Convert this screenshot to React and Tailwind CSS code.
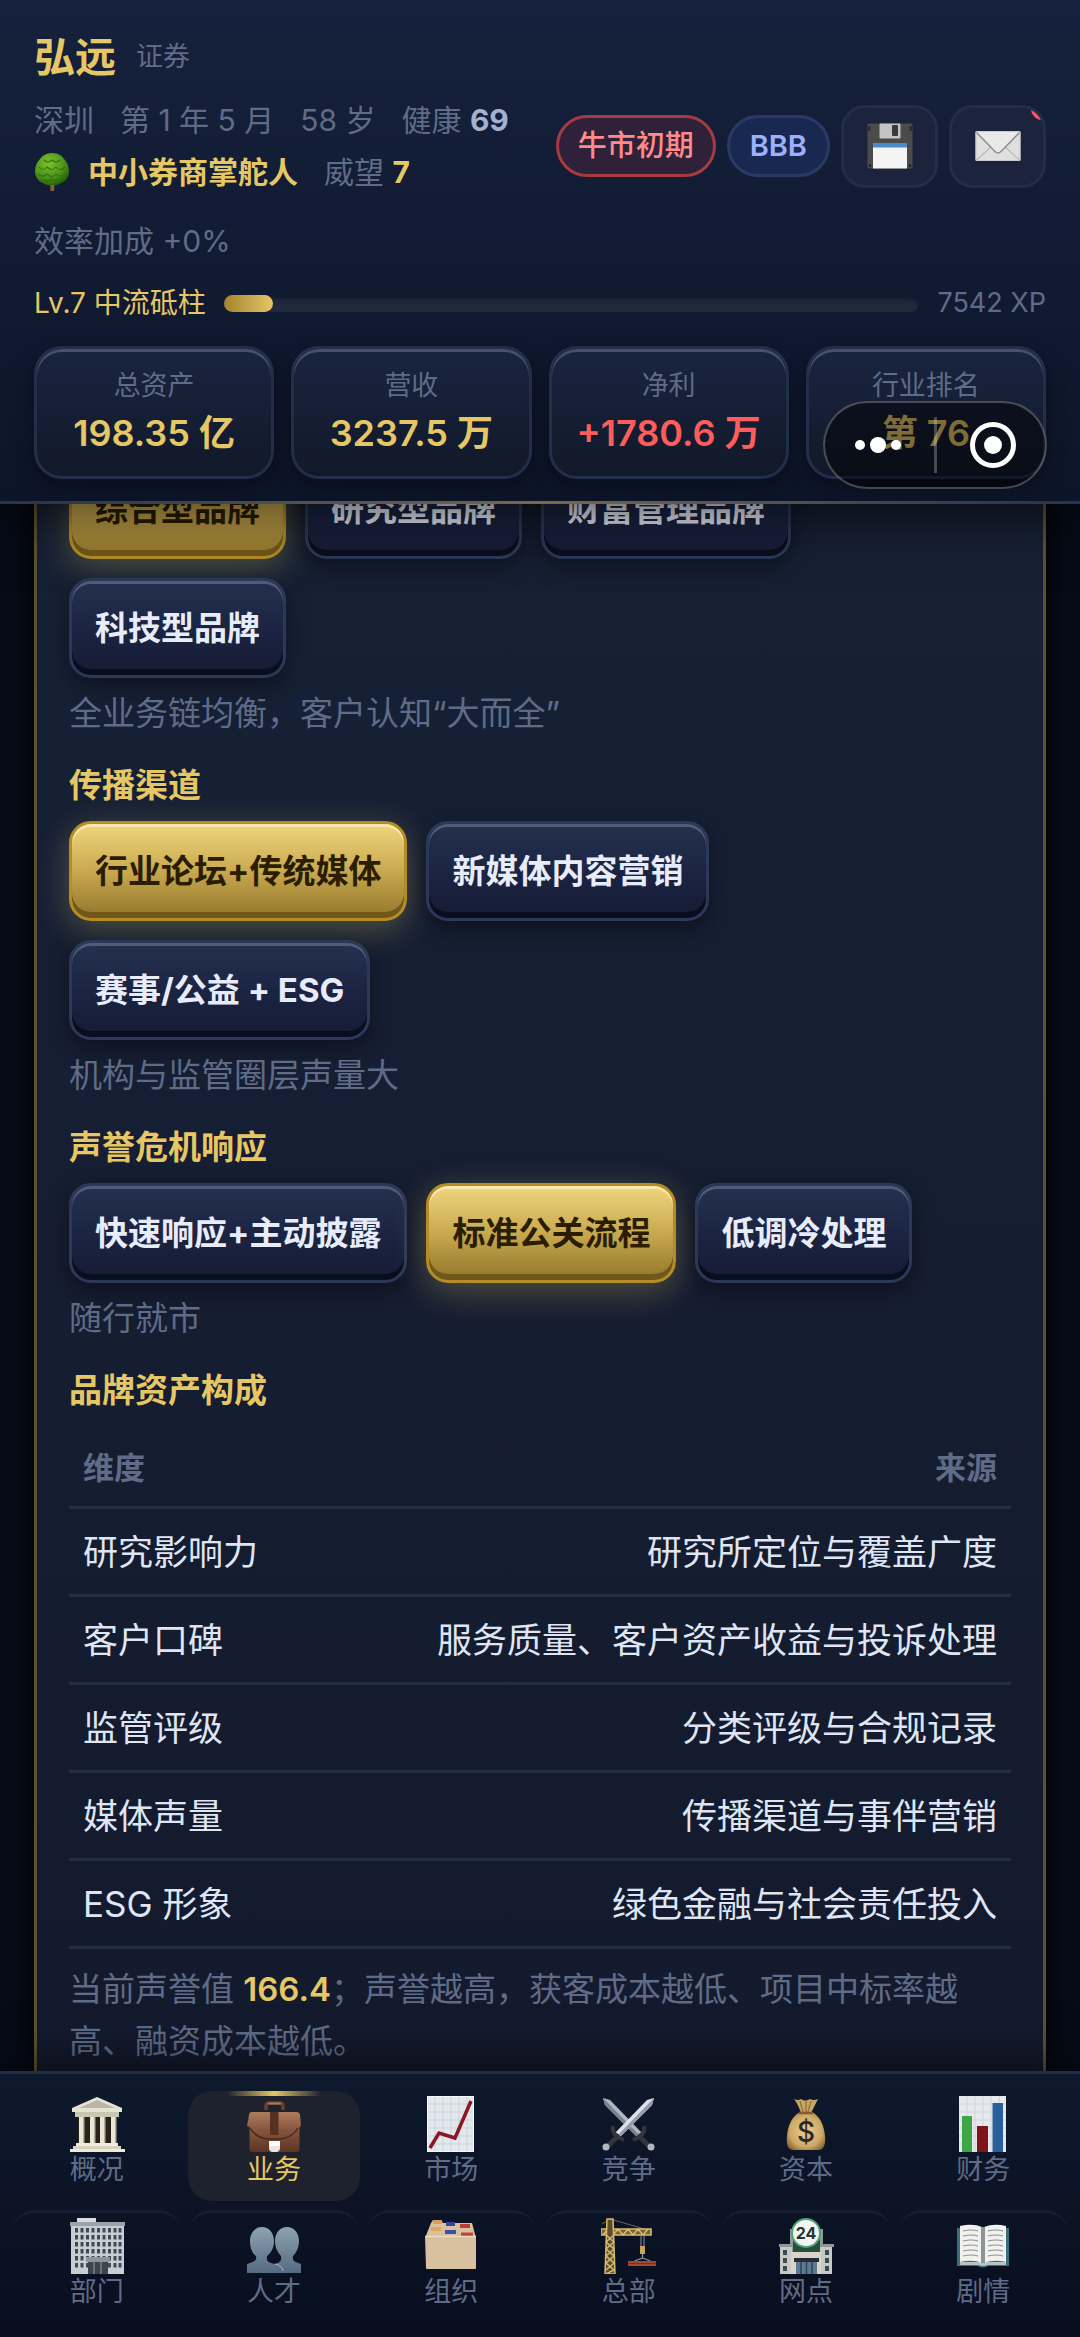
import React from "react";

function TreeIcon() {
  return (
    <svg className="h-[40px] w-[36px]" viewBox="0 0 36 40" aria-hidden="true">
      <defs>
        <radialGradient id="leaf" cx="0.4" cy="0.3" r="0.75">
          <stop offset="0" stopColor="#7fc22e" />
          <stop offset="0.6" stopColor="#4d9418" />
          <stop offset="1" stopColor="#245c0a" />
        </radialGradient>
      </defs>
      <path d="M16 28h5l-1 11h-3.500z" fill="#8a6234" />
      <path d="M18 1c7 0 10 3 12 6 3 3 5 7 5 12 0 6-3 10-8 12-3 2-6 3-9 2-3 1-6 0-9-2-5-2-8-6-8-12 0-5 2-9 5-12 2-3 6-6 12-6z" fill="url(#leaf)" />
      <g fill="none" stroke="#2d6b0e" strokeWidth="1.200" opacity="0.800">
        <path d="M10 8q4 4 8 0q4 4 8 0M5 15q4 5 8 0q5 5 9 0q4 5 9 0M4 22q5 4 9 0q5 5 9 0q5 4 10 0M9 28q5 3 9-1q5 4 9 0" />
      </g>
    </svg>
  );
}

function FloppyIcon() {
  return (
    <svg className="h-[46px] w-[46px]" viewBox="0 0 46 46" aria-hidden="true">
      <rect x="0.500" y="0.500" width="45" height="45" rx="1.500" fill="#4b4b4b" />
      <path d="M0.500 3h3v5h-3zM42.500 3h3v5h-3z" fill="#2f2f2f" />
      <rect x="12.500" y="0.500" width="21" height="15" rx="1" fill="#c4c4c4" />
      <rect x="25" y="2" width="6" height="11" rx="1" fill="#3a3a3a" />
      <rect x="6" y="20" width="34" height="25.500" fill="#f4f4f4" />
      <rect x="6" y="20" width="34" height="4.500" fill="#4b8cc8" />
      <path d="M2 41h2v3h-2zM42 41h2v3h-2z" fill="#222" />
    </svg>
  );
}

function MailIcon() {
  return (
    <svg className="h-[32px] w-[46px]" viewBox="0 0 46 32" aria-hidden="true">
      <rect x="0.500" y="1" width="45" height="30" rx="1" fill="#e0e0e0" />
      <path d="M1 30.500 17 16M45 30.500 29 16" stroke="#b9b9b9" strokeWidth="1.200" />
      <path d="M1 1.500h44L26 21.500q-3 3-6 0z" fill="#e9e9e9" />
      <path d="M1 2 20 21.500q3 3 6 0L45 2" fill="none" stroke="#8d8d8d" strokeWidth="1.500" />
      <rect x="1" y="1.500" width="44" height="29" rx="1" fill="none" stroke="#c9c9c9" />
    </svg>
  );
}

function MuseumIcon() {
  return (
    <svg className="h-14 w-14" viewBox="0 0 56 56" aria-hidden="true">
      <path d="M28 1 53 12v4H3v-4z" fill="#e6e3d3" />
      <path d="M28 4 46 12H10z" fill="#b9b6a5" />
      <path d="M6 16h44v5H6z" fill="#c9c6b4" />
      <path d="M9 21h38v26H9z" fill="#2a2118" />
      <path d="M10 21h5v27h-5zM21 21h5v27h-5zM31 21h5v27h-5zM42 21h5v27h-5z" fill="#e9e6d8" />
      <path d="M14 21h1.500v27H14zM25 21h1.500v27H25zM35 21h1.500v27H35zM46 21h1.500v27H46z" fill="#b3af9d" />
      <path d="M7 47h42v3H7z" fill="#efecdf" />
      <path d="M4 50h48v3H4z" fill="#d6d3c2" />
      <path d="M1 53h55v3H1z" fill="#eceadb" />
    </svg>
  );
}

function BriefcaseIcon() {
  return (
    <svg className="h-14 w-14" viewBox="0 0 56 56" aria-hidden="true">
      <defs>
        <linearGradient id="leather" x1="0" y1="0" x2="0" y2="1">
          <stop offset="0" stopColor="#b07d5e" />
          <stop offset="0.450" stopColor="#85553e" />
          <stop offset="1" stopColor="#5d3425" />
        </linearGradient>
      </defs>
      <path d="M20 14v-4q0-3 3-3h11q3 0 3 3v4" fill="none" stroke="#6a3f2e" strokeWidth="3.500" />
      <path d="M22 7.500h13" stroke="#a97c62" strokeWidth="2" />
      <path d="M3 19q0-3 3-3h44q4 0 4 3l1 11-1.500 1v22q0 3-3 3h-44q-3 0-3-3V31L1 30z" fill="url(#leather)" />
      <path d="M4 32q5 9 17 11h14q12-2 17-11" fill="none" stroke="#4b281b" strokeWidth="1.500" />
      <path d="M24 16h8.500v23H24z" fill="#57301f" />
      <path d="M23 45h11v7q0 3-3 4h-5q-3-1-3-4z" fill="#e8e6e4" />
      <path d="M23 45h11v5H23z" fill="#fff" />
    </svg>
  );
}

function LineChartIcon() {
  return (
    <svg className="h-14 w-14" viewBox="0 0 56 56" aria-hidden="true">
      <path d="M4 0h47v56H4z" fill="#e3e8ee" />
      <path d="M4 8h47M4 16h47M4 24h47M4 32h47M4 40h47M4 48h47M12 0v56M20 0v56M28 0v56M36 0v56M44 0v56" stroke="#ccd3dc" strokeWidth="1" />
      <path d="M4.500 0.500h46v55h-46z" fill="none" stroke="#f6f8fa" />
      <path d="M7 52 16 37 32 42 48 5" fill="none" stroke="#8e1622" strokeWidth="3.500" />
    </svg>
  );
}

function SwordsIcon() {
  return (
    <svg className="h-14 w-14" viewBox="0 0 56 56" aria-hidden="true">
      <path d="M2 2 9 4 41 37 36 41 4 9z" fill="#aeb6c0" />
      <path d="M2 2 38 39 36 41 4 9z" fill="#79828e" />
      <path d="M37 39 48 50" stroke="#33363c" strokeWidth="5" />
      <path d="M43 30q2 9-11 14" fill="none" stroke="#33363c" strokeWidth="4" />
      <path d="M53 2 46 4 14 37 19 41 51 9z" fill="#dde2e8" />
      <path d="M53 2 17 39 19 41 51 9z" fill="#939ca8" />
      <path d="M18 39 7 50" stroke="#33363c" strokeWidth="5" />
      <path d="M12 30q-2 9 11 14" fill="none" stroke="#33363c" strokeWidth="4" />
      <circle cx="5" cy="51" r="3.500" fill="#b3b6bd" />
      <circle cx="50" cy="51" r="3.500" fill="#b3b6bd" />
    </svg>
  );
}

function MoneyBagIcon() {
  return (
    <svg className="h-14 w-14" viewBox="0 0 56 56" aria-hidden="true">
      <defs>
        <radialGradient id="sack" cx="0.500" cy="0.500" r="0.600">
          <stop offset="0" stopColor="#e9cf94" />
          <stop offset="0.700" stopColor="#cda966" />
          <stop offset="1" stopColor="#8a6a36" />
        </radialGradient>
      </defs>
      <path d="M16 3q4 2 7 0 4 3 9 0 4 2 8 0-3 6-7 14H23Q20 8 16 3z" fill="#c8a567" />
      <path d="M22 5l3 11M33 5l-3 11M28 5v11" stroke="#92713c" strokeWidth="1.300" />
      <path d="M22 16h12c8 4 12 13 13 24 1 10-2 14-7 14H16c-6 0-8-5-7-14 1-11 5-20 13-24z" fill="url(#sack)" />
      <path d="M21 17h14" stroke="#80602e" strokeWidth="2.500" />
      <text x="28" y="46" textAnchor="middle" className="font-['Inter'] text-[28px] font-medium" fill="#2f2a24">$</text>
    </svg>
  );
}

function BarChartIcon() {
  return (
    <svg className="h-14 w-14" viewBox="0 0 56 56" aria-hidden="true">
      <path d="M4 0h47v56H4z" fill="#e6e9ee" />
      <path d="M4 8h47M4 16h47M4 24h47M4 32h47M4 40h47M4 48h47M12 0v56M20 0v56M28 0v56M36 0v56M44 0v56" stroke="#d0d5dc" strokeWidth="1" />
      <path d="M7 20h10v36H7z" fill="#3fa648" />
      <path d="M22 30h11v26H22z" fill="#7e1519" />
      <path d="M37.500 7h10.500v49H37.500z" fill="#2a5f9e" />
    </svg>
  );
}

function OfficeIcon() {
  const rows = [10, 17, 24, 31, 38, 45];
  const columns = [6, 11.5, 17, 22.500, 28, 33.500, 39, 44.500, 49.500];
  return (
    <svg className="h-14 w-14" viewBox="0 0 56 56" aria-hidden="true">
      <path d="M8 0h19v4H8z" fill="#d8dcdf" />
      <path d="M1 4h55v4H1z" fill="#9ba2a8" />
      <path d="M2 8h53v48H2z" fill="#c9ced2" />
      {rows.map((y) =>
        columns.map((x) => <rect key={`${x}-${y}`} x={x} y={y} width="3" height="4.500" fill="#3d4a55" />)
      )}
      <path d="M17 39h24v5H17z" fill="#8d949a" />
      <path d="M19 44h20v12H19z" fill="#3b464e" />
      <path d="M25 44v12M32 44v12" stroke="#76828b" strokeWidth="1.500" />
    </svg>
  );
}

function PeopleIcon() {
  return (
    <svg className="h-14 w-14" viewBox="0 0 56 56" aria-hidden="true">
      <defs>
        <linearGradient id="silhouette" x1="0" y1="0" x2="0" y2="1">
          <stop offset="0" stopColor="#8da3b1" />
          <stop offset="1" stopColor="#566b80" />
        </linearGradient>
      </defs>
      <g fill="url(#silhouette)" transform="translate(0 2)">
        <path d="M41 7c7 0 12 6 12 14 0 7-3 12-6 15-1 5 2 6 8 8v9H26v-8c7-2 10-3 9-9-4-4-6-9-6-15C29 13 34 7 41 7z" />
        <path d="M16 7c7 0 12 6 12 14 0 7-3 12-7 15-1 6 2 7 9 8 4 1 7 3 7 9H1v-9c7-2 10-3 9-8-4-3-6-8-6-15C4 13 9 7 16 7z" />
      </g>
      <path d="M29 46q7 1 8 7" fill="none" stroke="#a6b6c1" strokeWidth="1" />
    </svg>
  );
}

function FolderBoxIcon() {
  return (
    <svg className="h-14 w-14" viewBox="0 0 56 56" aria-hidden="true">
      <path d="M10 2h8l2 3h29l4 15H2L8 5z" fill="#d9c19c" />
      <path d="M10 2h9v4h-9z" fill="#d99c61" />
      <path d="M8 9h10v4H8z" fill="#e0a566" />
      <path d="M23 4h9v4h-9z" fill="#3245a0" />
      <path d="M22 12h11v4H22z" fill="#3a50b5" />
      <path d="M37 6h10v4H37z" fill="#b53d3a" />
      <path d="M38 14.500h12v4H38z" fill="#c04642" />
      <path d="M2 18h19v-1h15v2h17v31q0 1-1 1H4q-1 0-1-1z" fill="#d8c19f" />
      <path d="M2 18.500h51" stroke="#ecdcc1" strokeWidth="1.500" />
    </svg>
  );
}

function CraneIcon() {
  return (
    <svg className="h-14 w-14" viewBox="0 0 56 56" aria-hidden="true">
      <path d="M1 6 9 1l38 11" fill="none" stroke="#6b6758" strokeWidth="1" />
      <path d="M0 11h50v6H0z" fill="#7a6230" />
      <path d="M0 11h50v6H0zM2 17l5-6 5 6 5-6 5 6 5-6 5 6 5-6 5 6 5-6" fill="none" stroke="#d6bb76" strokeWidth="1.600" />
      <path d="M6 1h6l2 55H4z" fill="#5f4d27" />
      <path d="M6 1h6l2 55H4zM5 17l8 7-8 7 8 7-8 7 8 7-8 4M13 17l-8 7 8 7-8 7 8 7-8 7" fill="none" stroke="#d6bb76" strokeWidth="1.500" />
      <path d="M40 17v12M43 17v12" stroke="#8d9499" strokeWidth="1" />
      <path d="M39 28h5v8h-5z" fill="#c9a45d" />
      <path d="M41.500 36v4l-8 3M41.500 40l8 3" fill="none" stroke="#8d9499" strokeWidth="1.200" />
      <path d="M27 43h28v5H27z" fill="#a5472f" />
      <path d="M27 45.500h28" stroke="#7d3120" strokeWidth="1" />
    </svg>
  );
}

function StoreIcon() {
  return (
    <svg className="h-14 w-14" viewBox="0 0 56 56" aria-hidden="true">
      <path d="M12 11h33v45H12z" fill="#8d9a95" />
      <path d="M15 11h27v24H15z" fill="#26503b" />
      <path d="M2 27h12v29H2zM42 27h12v29H42z" fill="#c5cac8" />
      <path d="M1 26h13v3H1zM42 26h14v3H42z" fill="#8e9794" />
      <path d="M5 32h4v5H5zM5 40h4v5H5zM5 48h4v5H5zM47 32h4v5h-4zM47 40h4v5h-4zM47 48h4v5h-4z" fill="#3d4a49" />
      <path d="M13 34h30v22H13z" fill="#d9d4c7" />
      <path d="M16 40h25v4H16z" fill="#252b3a" />
      <path d="M18 44h21v12H18z" fill="#5d7b90" />
      <path d="M23 44v12M28.500 44v12M34 44v12" stroke="#2c4356" strokeWidth="1.500" />
      <circle cx="28" cy="15" r="14" fill="#f2f5f2" stroke="#4ea37a" strokeWidth="2" />
      <text x="28" y="21" textAnchor="middle" className="font-['Inter'] text-[16px] font-bold" fill="#2a3330">24</text>
    </svg>
  );
}

function BookIcon() {
  return (
    <svg className="h-14 w-14" viewBox="0 0 56 56" aria-hidden="true">
      <path d="M2 10h52v38H33q-5 3-10 0H2z" fill="#3d6e7c" />
      <path d="M5 44h46v3H33q-5 2-10 0H5z" fill="#b9c3c4" />
      <path d="M5 8q13-3 22 1v36q-9-4-22-1z" fill="#f1f1ef" />
      <path d="M51 8q-12-3-22 1v36q10-4 22-1z" fill="#f1f1ef" />
      <path d="M26 9h4v36h-4z" fill="#8d9492" />
      <path d="M8 13q9-2 15 0M8 18q9-2 15 0M8 23q9-2 15 0M8 28q9-2 15 0M8 33q9-2 15 0M8 38q9-2 15 0M33 13q8-2 15 0M33 18q8-2 15 0M33 23q8-2 15 0M33 28q8-2 15 0M33 33q8-2 15 0M33 38q8-2 15 0" fill="none" stroke="#8f9290" strokeWidth="1.200" />
    </svg>
  );
}

const stats = [
  { label: "总资产", value: "198.35 亿", tone: "text-[#e6c766]" },
  { label: "营收", value: "3237.5 万", tone: "text-[#e6c766]" },
  { label: "净利", value: "+1780.6 万", tone: "text-[#ff5c5c]" },
  { label: "行业排名", value: "第 76", tone: "text-[#e6c766]" },
];

const dimensions = [
  ["研究影响力", "研究所定位与覆盖广度"],
  ["客户口碑", "服务质量、客户资产收益与投诉处理"],
  ["监管评级", "分类评级与合规记录"],
  ["媒体声量", "传播渠道与事伴营销"],
  ["ESG 形象", "绿色金融与社会责任投入"],
];

const tabs = [
  { label: "概况", Icon: MuseumIcon },
  { label: "业务", Icon: BriefcaseIcon, active: true },
  { label: "市场", Icon: LineChartIcon },
  { label: "竞争", Icon: SwordsIcon },
  { label: "资本", Icon: MoneyBagIcon },
  { label: "财务", Icon: BarChartIcon },
  { label: "部门", Icon: OfficeIcon },
  { label: "人才", Icon: PeopleIcon },
  { label: "组织", Icon: FolderBoxIcon },
  { label: "总部", Icon: CraneIcon },
  { label: "网点", Icon: StoreIcon },
  { label: "剧情", Icon: BookIcon },
];

function Choice({ children, selected }) {
  const tone = selected
    ? "border-[#b58d26] bg-linear-to-b from-[#f0d67e] via-[#c9a94f] to-[#92762a] text-[#2a1d02] shadow-[inset_0_3px_0_#f9e8ae,inset_0_-6px_0_#71581a,0_8px_34px_rgba(230,199,102,0.3)]"
    : "border-[#2b3858] bg-linear-to-b from-[#25304f] via-[#1b2443] to-[#151b33] text-[#e8ecf8] shadow-[inset_0_3px_0_#515c7b,inset_0_-6px_0_#090e1e,0_8px_22px_rgba(0,0,0,0.4)]";
  return (
    <button
      type="button"
      aria-pressed={Boolean(selected)}
      className={`rounded-[22px] border-3 px-[23px] py-[22px] text-[33px] leading-[50px] font-bold whitespace-nowrap ${tone}`}
    >
      {children}
    </button>
  );
}

function ChoiceRow({ children }) {
  return <div className="flex flex-wrap gap-x-[19px] gap-y-[19px]">{children}</div>;
}

function Heading({ children }) {
  return <h2 className="mt-[23px] text-[33px] leading-[46px] font-bold text-[#e6c766]">{children}</h2>;
}

function Note({ children }) {
  return <p className="mt-[9px] text-[33px] leading-[52px] text-[#5f6b87]">{children}</p>;
}

function Header() {
  return (
    <header className="relative z-10 bg-linear-to-b from-[#16213d] to-[#0c1528] px-[34px] pt-[33px] shadow-[0_12px_50px_rgba(0,0,0,0.65)]">
      <div className="flex h-12 items-center gap-5 leading-[48px]">
        <h1 className="text-[41px] font-bold text-[#e6c766]">弘远</h1>
        <span className="text-[27px] text-[#5f6b87]">证券</span>
      </div>

      <div className="mt-[13px] flex items-center justify-between">
        <div className="text-[30px] leading-[52px] text-[#5f6b87]">
          <div className="flex gap-[26px]">
            <span>深圳</span>
            <span>第 1 年 5 月</span>
            <span>58 岁</span>
            <span>
              健康 <strong className="text-[#a3b0d0]">69</strong>
            </span>
          </div>
          <div className="flex items-center">
            <TreeIcon />
            <strong className="ml-[18px] text-[#e6c766]">中小券商掌舵人</strong>
            <span className="ml-[26px]">
              威望 <strong className="text-[#e6c766]">7</strong>
            </span>
          </div>
        </div>
        <div className="flex items-center gap-[11px]">
          <span className="rounded-full border-3 border-[#a53a42] bg-[#30213a] px-[19px] py-[7px] text-[29px] leading-[42px] font-medium text-[#ff8a8a]">
            牛市初期
          </span>
          <span className="rounded-full border-3 border-[#2b3a62] bg-[#182850] px-[20px] py-[7px] text-[29px] leading-[42px] font-semibold text-[#9db0fb]">
            BBB
          </span>
          <button type="button" aria-label="存档" className="flex h-[83px] w-[97px] items-center justify-center rounded-[24px] border-3 border-[#232d48] bg-[#1b243c]">
            <FloppyIcon />
          </button>
          <button type="button" aria-label="消息" className="relative flex h-[83px] w-[97px] items-center justify-center overflow-hidden rounded-[24px] border-3 border-[#232d48] bg-[#1b243c]">
            <MailIcon />
            <span className="absolute -top-[11px] -right-[11px] size-[23px] rounded-full bg-[#ff5468]" />
          </button>
        </div>
      </div>

      <p className="mt-[17px] text-[30px] leading-[52px] text-[#5f6b87]">效率加成 +0%</p>

      <div className="mt-[18px] flex items-center gap-[18px] leading-[36px]">
        <span className="text-[28px] text-[#e6c766]">Lv.7 中流砥柱</span>
        <div className="h-[17px] flex-1 rounded-full bg-[#21293d] shadow-[inset_0_4px_5px_#10192c]">
          <div className="h-full w-[7%] rounded-full bg-linear-to-r from-[#a2842f] to-[#e6c766]" />
        </div>
        <span className="text-[27px] text-[#5f6b87]">7542 XP</span>
      </div>

      <div className="mt-[25px] grid grid-cols-4 gap-[17px] pb-[22px]">
        {stats.map((stat) => (
          <div
            key={stat.label}
            className="rounded-[28px] border-3 border-[#232e4b] bg-linear-to-b from-[#19243f] to-[#111929] pt-[17px] pb-[19px] text-center shadow-[inset_0_3px_0_#465069,0_6px_20px_rgba(0,0,0,0.4)]"
          >
            <div className="text-[27px] leading-[40px] text-[#5f6b87]">{stat.label}</div>
            <div className={`mt-[3px] text-[36px] leading-[48px] font-semibold whitespace-nowrap ${stat.tone}`}>{stat.value}</div>
          </div>
        ))}
      </div>
      <div className="-mx-[34px] h-[3px] bg-linear-to-r from-[#26314f] via-[#77694a] to-[#26314f]" />

      <div className="absolute right-[33px] bottom-[15px] flex h-[88px] w-[224px] items-center justify-between rounded-full border-2 border-white/25 bg-black/45 pr-[29px] pl-[30px]">
        <button type="button" aria-label="更多" className="flex items-center gap-[5px]">
          <span className="size-[10px] rounded-full bg-white" />
          <span className="size-4 rounded-full bg-white" />
          <span className="size-[10px] rounded-full bg-white" />
        </button>
        <span className="h-14 w-[3px] bg-white/25" />
        <button type="button" aria-label="关闭" className="flex size-[46px] items-center justify-center rounded-full border-5 border-white">
          <span className="size-[18px] rounded-full bg-white" />
        </button>
      </div>
    </header>
  );
}

function BrandPanel() {
  return (
    <section className="flex min-h-full shrink-0 flex-col justify-end border-x-3 border-[#5c522f] bg-linear-to-b from-[#162135] to-[#141a2e] px-8 pb-1 shadow-[0_0_30px_#000]">
      <ChoiceRow>
        <Choice selected>综合型品牌</Choice>
        <Choice>研究型品牌</Choice>
        <Choice>财富管理品牌</Choice>
        <Choice>科技型品牌</Choice>
      </ChoiceRow>
      <Note>全业务链均衡，客户认知“大而全”</Note>

      <Heading>传播渠道</Heading>
      <div className="mt-[13px]">
        <ChoiceRow>
          <Choice selected>行业论坛+传统媒体</Choice>
          <Choice>新媒体内容营销</Choice>
          <Choice>赛事/公益 + ESG</Choice>
        </ChoiceRow>
      </div>
      <Note>机构与监管圈层声量大</Note>

      <Heading>声誉危机响应</Heading>
      <div className="mt-[13px]">
        <ChoiceRow>
          <Choice>快速响应+主动披露</Choice>
          <Choice selected>标准公关流程</Choice>
          <Choice>低调冷处理</Choice>
        </ChoiceRow>
      </div>
      <Note>随行就市</Note>

      <Heading>品牌资产构成</Heading>
      <table className="mt-[17px] w-full border-separate border-spacing-0">
        <thead>
          <tr className="text-[31px] leading-[46px] text-[#5f6b87]">
            <th scope="col" className="border-b-3 border-[#222d46] px-[14px] py-[15px] text-left font-bold">维度</th>
            <th scope="col" className="border-b-3 border-[#222d46] px-[14px] py-[15px] text-right font-bold">来源</th>
          </tr>
        </thead>
        <tbody>
          {dimensions.map(([name, source]) => (
            <tr key={name} className="text-[35px] leading-[51px] text-[#dfe5f3]">
              <td className="border-b-3 border-[#222d46] px-[14px] pt-[18px] pb-[16px] text-left">{name}</td>
              <td className="border-b-3 border-[#222d46] px-[14px] pt-[18px] pb-[16px] text-right">{source}</td>
            </tr>
          ))}
        </tbody>
      </table>
      <p className="mt-[14px] text-[33px] leading-[52px] text-[#5f6b87]">
        当前声誉值 <strong className="font-semibold text-[#e6c766]">166.4</strong>；声誉越高，获客成本越低、项目中标率越高、融资成本越低。
      </p>
    </section>
  );
}

function TabBar() {
  return (
    <nav className="relative z-10 grid grid-cols-6 gap-x-[6px] gap-y-[9px] border-t-3 border-[#202d47] bg-linear-to-b from-[#0f192d] to-[#080e1e] px-[11px] py-[17px] shadow-[0_-8px_40px_rgba(0,0,0,0.55)]">
      {tabs.map(({ label, Icon, active }, index) => {
        const surface = active ? "bg-[#1e222c] text-[#e6c766]" : "text-[#5f6b87]";
        const edge = index > 5 ? "border-t-3 border-[#141d32]" : "";
        return (
          <button
            key={label}
            type="button"
            aria-current={active ? "page" : undefined}
            className={`relative flex h-[110px] flex-col items-center rounded-[24px] pt-[5px] text-[27px] leading-[36px] ${surface} ${edge}`}
          >
            {active && <span className="absolute top-0 left-1/2 h-[5px] w-[94px] -translate-x-1/2 bg-linear-to-r from-transparent via-[#e6c766] to-transparent" />}
            <Icon />
            <span>{label}</span>
          </button>
        );
      })}
    </nav>
  );
}

export default function App() {
  return (
    <div className="flex h-screen flex-col overflow-hidden bg-[#070c18] font-['Inter','Noto_Sans_CJK_SC',sans-serif]">
      <Header />
      <main className="flex min-h-0 flex-1 flex-col justify-end overflow-hidden px-[34px]">
        <BrandPanel />
      </main>
      <TabBar />
    </div>
  );
}
